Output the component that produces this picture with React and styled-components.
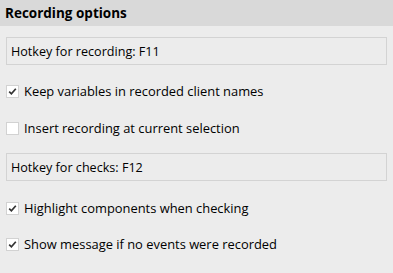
import React from "react";
import styled, { createGlobalStyle } from "styled-components";

const Global = createGlobalStyle`
  html, body { margin: 0; padding: 0; background: #ececec; }
  body { font-family: "Open Sans", "Liberation Sans", sans-serif; }
`;

const Panel = styled.div`
  width: 393px;
  height: 273px;
  background: #ececec;
  display: flex;
  flex-direction: column;
`;

const Header = styled.div`
  height: 26px;
  background: #d9d9d9;
  display: flex;
  align-items: center;
  padding-left: 5px;
  font-weight: 700;
  font-size: 13.5px;
  color: #000;
`;

const Body = styled.div`
  display: flex;
  flex-direction: column;
  padding: 0 6px;
`;

const HotkeyBox = styled.div`
  margin-top: ${(p) => p.$top}px;
  height: 28px;
  box-sizing: border-box;
  border: 1px solid #d3d3d3;
  display: flex;
  align-items: center;
  padding-left: 4px;
  font-size: 12.6px;
  color: #000;
`;

const Row = styled.label`
  margin-top: ${(p) => p.$top}px;
  height: 18px;
  display: flex;
  align-items: center;
  gap: 5px;
  font-size: 12.9px;
  color: #000;
`;

const Box = styled.span`
  width: 13px;
  height: 13px;
  box-sizing: border-box;
  border: 1px solid #d2d2d2;
  background: #fff;
  display: flex;
  align-items: center;
  justify-content: center;
`;

const Check = ({ checked }) => (
  <Box>
    {checked && (
      <svg width="9" height="9" viewBox="0 0 9 9">
        <path d="M1.2 4.6 L3.4 6.8 L7.8 1.8" fill="none" stroke="#333" strokeWidth="1.7" />
      </svg>
    )}
  </Box>
);

export default function App() {
  return (
    <Panel>
      <Global />
      <Header>Recording options</Header>
      <Body>
        <HotkeyBox $top={11}>Hotkey for recording: F11</HotkeyBox>
        <Row $top={17}>
          <Check checked />
          Keep variables in recorded client names
        </Row>
        <Row $top={19}>
          <Check />
          Insert recording at current selection
        </Row>
        <HotkeyBox $top={16}>Hotkey for checks: F12</HotkeyBox>
        <Row $top={18}>
          <Check checked />
          Highlight components when checking
        </Row>
        <Row $top={18}>
          <Check checked />
          Show message if no events were recorded
        </Row>
      </Body>
    </Panel>
  );
}
